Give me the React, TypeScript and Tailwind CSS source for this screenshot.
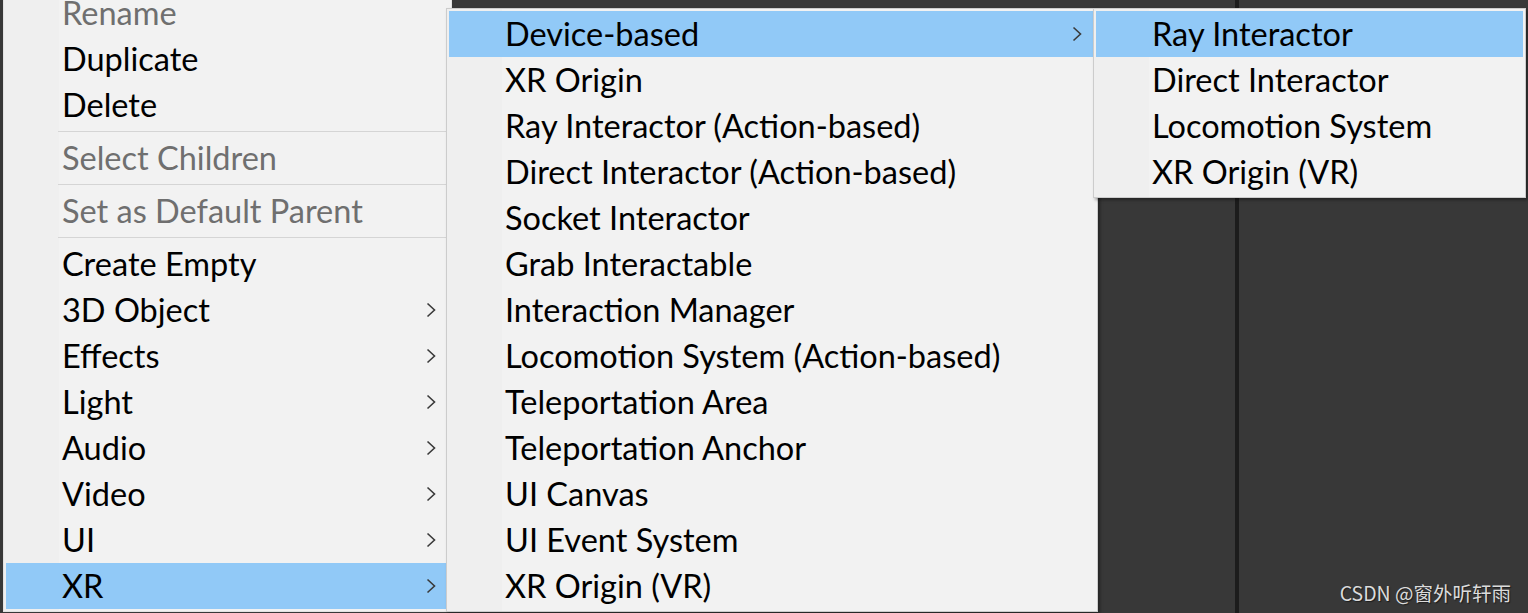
import React from 'react';

type Entry =
  | { sep: true }
  | { sep?: false; label: string; disabled?: boolean; sub?: boolean; active?: boolean };

const hierarchyMenu: Entry[] = [
  { label: 'Rename', disabled: true },
  { label: 'Duplicate' },
  { label: 'Delete' },
  { sep: true },
  { label: 'Select Children', disabled: true },
  { sep: true },
  { label: 'Set as Default Parent', disabled: true },
  { sep: true },
  { label: 'Create Empty' },
  { label: '3D Object', sub: true },
  { label: 'Effects', sub: true },
  { label: 'Light', sub: true },
  { label: 'Audio', sub: true },
  { label: 'Video', sub: true },
  { label: 'UI', sub: true },
  { label: 'XR', sub: true, active: true },
];

const xrMenu: Entry[] = [
  { label: 'Device-based', sub: true, active: true },
  { label: 'XR Origin' },
  { label: 'Ray Interactor (Action-based)' },
  { label: 'Direct Interactor (Action-based)' },
  { label: 'Socket Interactor' },
  { label: 'Grab Interactable' },
  { label: 'Interaction Manager' },
  { label: 'Locomotion System (Action-based)' },
  { label: 'Teleportation Area' },
  { label: 'Teleportation Anchor' },
  { label: 'UI Canvas' },
  { label: 'UI Event System' },
  { label: 'XR Origin (VR)' },
];

const deviceMenu: Entry[] = [
  { label: 'Ray Interactor', active: true },
  { label: 'Direct Interactor' },
  { label: 'Locomotion System' },
  { label: 'XR Origin (VR)' },
];

const Chevron = () => (
  <svg width="10" height="16" viewBox="0 0 10 16" className="shrink-0">
    <polyline points="1.5,1.5 8.5,8 1.5,14.5" fill="none" stroke="#3a3a3a" strokeWidth="1.6" />
  </svg>
);

const MenuList = ({ items }: { items: Entry[] }) => (
  <>
    {items.map((item, i) =>
      item.sep ? (
        <div key={i} className="py-[3px] pl-[52px]">
          <div className="h-px bg-[#d5d5d5]" />
        </div>
      ) : (
        <div
          key={i}
          className={`flex h-[46px] items-center pl-[56px] pr-[13px] ${
            item.active ? 'bg-[#91c9f7]' : ''
          } ${item.disabled ? 'text-[#6f6f6f]' : 'text-black'}`}
        >
          <span className="flex-1 whitespace-nowrap text-[32.5px] leading-none">{item.label}</span>
          {item.sub && <Chevron />}
        </div>
      )
    )}
  </>
);

export default function App() {
  return (
    <div className="relative h-[613px] w-[1528px] overflow-hidden bg-[#383838] font-['Lato',sans-serif]">
      {/* Editor panels behind the menus */}
      <div className="flex h-full">
        <div className="w-[1235px] shrink-0" />
        <div className="w-[4px] shrink-0 bg-[#1c1c1c]" />
        <div className="flex flex-1 items-end justify-end pb-[11px] pr-[17px]">
          <span className="font-['Noto_Sans_CJK_SC',sans-serif] text-[19.5px] leading-none text-[#dcdcdc] [text-shadow:1px_1px_1px_rgba(0,0,0,0.5)]">
            CSDN @窗外听轩雨
          </span>
        </div>
      </div>

      {/* Context menu cascade */}
      <div className="absolute left-[3px] top-0 flex items-start">
        <div className="relative -mt-[13px] w-[449px] shrink-0 border border-[#e2e2e2] bg-[linear-gradient(to_right,#efefef_55px,#f2f2f2_55px)] p-[2px]">
          <MenuList items={hierarchyMenu} />
        </div>
        <div className="relative -ml-[6px] mt-[8px] w-[652px] shrink-0 border border-[#cccccc] bg-[linear-gradient(to_right,#efefef_55px,#f2f2f2_55px)] p-[2px] shadow-[2px_2px_3px_rgba(0,0,0,0.35)]">
          <MenuList items={xrMenu} />
        </div>
        <div className="relative -ml-[5px] mt-[8px] w-[433px] shrink-0 border border-[#cccccc] bg-[linear-gradient(to_right,#efefef_55px,#f2f2f2_55px)] p-[2px] shadow-[2px_2px_3px_rgba(0,0,0,0.35)]">
          <MenuList items={deviceMenu} />
        </div>
      </div>
    </div>
  );
}
